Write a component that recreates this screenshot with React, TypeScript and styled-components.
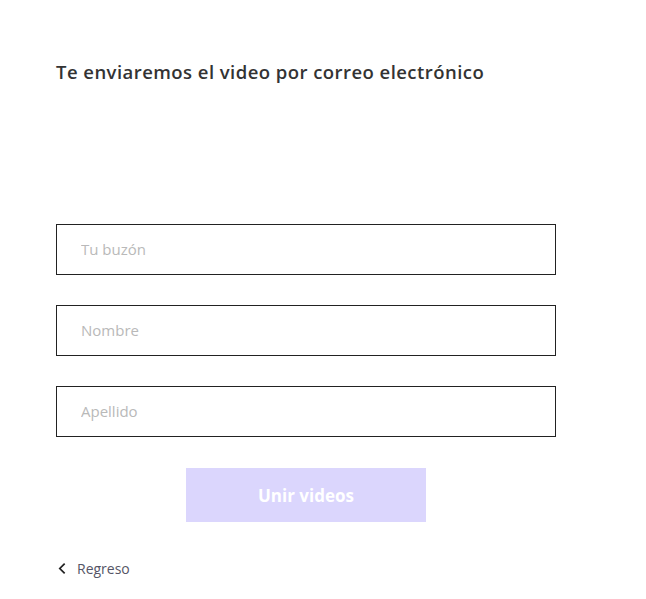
import React from "react";
import styled, { createGlobalStyle } from "styled-components";

const Global = createGlobalStyle`
  html, body { margin: 0; padding: 0; background: #ffffff; }
  body { font-family: "Open Sans", "Noto Sans", sans-serif; }
  * { box-sizing: border-box; }
`;

const Page = styled.div`
  width: 646px;
  height: 599px;
  padding: 60px 0 0 56px;
  display: flex;
  flex-direction: column;
`;

const Title = styled.h1`
  margin: 0;
  font-size: 18.5px;
  font-weight: 600;
  color: #333333;
  line-height: 24px;
  letter-spacing: 0.45px;
`;

const Form = styled.form`
  margin-top: 140px;
  width: 500px;
  display: flex;
  flex-direction: column;
  gap: 30px;
`;

const Field = styled.input`
  width: 500px;
  height: 51px;
  border: 1px solid #222222;
  border-radius: 0;
  padding: 0 24px 1px;
  font-family: inherit;
  font-size: 15px;
  color: #333;
  outline: none;
  &::placeholder { color: #b9b9b9; }
`;

const Submit = styled.button`
  align-self: center;
  width: 240px;
  height: 54px;
  margin-top: 1px;
  border: none;
  background: #dbd6fd;
  color: #ffffff;
  font-family: inherit;
  font-weight: 700;
  font-size: 17px;
`;

const Back = styled.a`
  margin-top: 37px;
  display: flex;
  align-items: center;
  gap: 8px;
  font-size: 14px;
  color: #555566;
  text-decoration: none;
`;

export default function App() {
  return (
    <>
      <Global />
      <Page>
        <Title>Te enviaremos el video por correo electrónico</Title>
        <Form onSubmit={(e) => e.preventDefault()}>
          <Field placeholder="Tu buzón" />
          <Field placeholder="Nombre" />
          <Field placeholder="Apellido" />
          <Submit type="submit">Unir videos</Submit>
        </Form>
        <Back href="#">
          <svg width="13" height="13" viewBox="0 0 12 12" fill="none">
            <path d="M8 1.5 L3.5 6 L8 10.5" stroke="#222" strokeWidth="1.6" />
          </svg>
          Regreso
        </Back>
      </Page>
    </>
  );
}
